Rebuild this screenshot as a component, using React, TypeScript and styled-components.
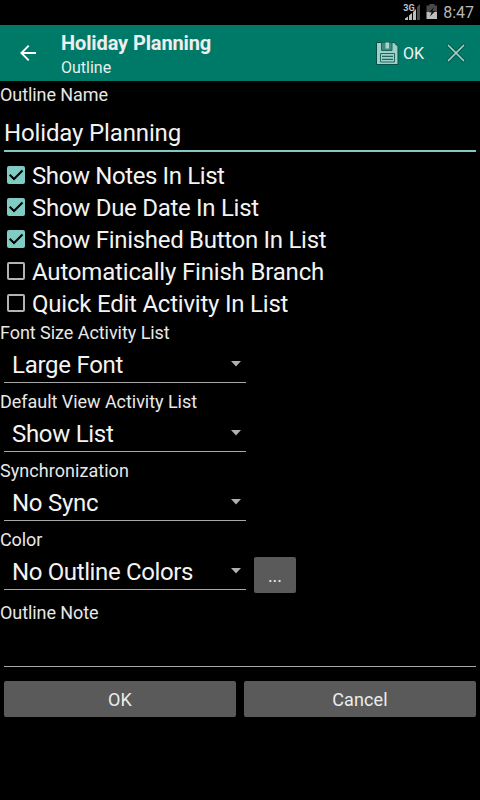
import React from "react";
import styled, { createGlobalStyle } from "styled-components";

const GlobalStyle = createGlobalStyle`
  *, *::before, *::after { box-sizing: border-box; }
  body { margin: 0; background: #000; }
  button { border: 0; padding: 0; font: inherit; color: inherit; background: none; }
`;

const Screen = styled.div`
  width: 480px;
  height: 800px;
  overflow: hidden;
  background: #000;
  color: #f3f3f3;
  font-family: Roboto, sans-serif;
  white-space: nowrap;
`;

const StatusBar = styled.div`
  display: flex;
  justify-content: flex-end;
  height: 25px;
  padding-right: 6px;
`;

const Clock = styled.span`
  margin-left: 5px;
  font-size: 16px;
  line-height: 25px;
  color: #b8b8b8;
`;

const AppBar = styled.header`
  display: flex;
  align-items: center;
  height: 56px;
  background: #007a68;
`;

const BackButton = styled.button`
  display: flex;
  width: 61px;
  height: 56px;
`;

const Titles = styled.div`
  flex: 1;
  height: 56px;
  padding-top: 6px;
`;

const Title = styled.h1`
  margin: 0;
  font-size: 20px;
  line-height: 24px;
  font-weight: 700;
  letter-spacing: -0.12px;
  color: #eeeeee;
`;

const Subtitle = styled.div`
  font-size: 16px;
  line-height: 26px;
  color: #e6f0ee;
`;

const SaveAction = styled.button`
  display: flex;
  align-items: center;
  width: 61px;
  height: 56px;
  font-size: 16px;
`;

const CloseAction = styled.button`
  display: flex;
  width: 48px;
  height: 56px;
`;

const Label = styled.div<{ $height?: number; $spacing?: number }>`
  height: ${(p) => p.$height ?? 26}px;
  font-size: 18px;
  line-height: ${(p) => p.$height ?? 26}px;
  letter-spacing: ${(p) => p.$spacing ?? 0}px;
  color: #e8e8e8;
`;

const TextField = styled.div`
  height: 43px;
  margin: 0 4px 8px;
  padding-top: 8px;
  border-bottom: 2px solid #80cbc4;
  font-size: 24px;
  line-height: 32px;
  letter-spacing: -0.14px;
`;

const CheckRow = styled.div<{ $spacing: number }>`
  display: flex;
  height: 32px;
  padding-left: 7px;
  font-size: 24px;
  line-height: 32px;
  letter-spacing: ${(p) => p.$spacing}px;
`;

const Box = styled.span<{ $checked: boolean }>`
  flex: none;
  width: 18px;
  height: 18px;
  margin: 6px 7px 0 0;
  border: 2px solid ${(p) => (p.$checked ? "#80cbc4" : "#b3b3b3")};
  border-radius: 2px;
  background: ${(p) => (p.$checked ? "#80cbc4" : "transparent")};

  svg { display: block; margin: -2px; }
`;

const Group = styled.section`
  height: 69px;
`;

const SpinnerRow = styled.div`
  display: flex;
  gap: 8px;
  padding-left: 4px;
`;

const Spinner = styled.div<{ $spacing: number }>`
  display: flex;
  justify-content: space-between;
  width: 242px;
  height: 37px;
  padding: 3px 5px 0 8px;
  border-bottom: 1px solid #a8a8a8;
  font-size: 24px;
  line-height: 32px;
  letter-spacing: ${(p) => p.$spacing}px;
`;

const Arrow = styled.svg`
  display: block;
  width: 10px;
  height: 6px;
  margin-top: 12px;
`;

const RaisedButton = styled.button<{ $spacing?: number }>`
  height: 36px;
  border-radius: 2px;
  background: #5a5a5a;
  font-size: 18px;
  line-height: 37px;
  letter-spacing: ${(p) => p.$spacing ?? 0}px;
  color: #ececec;
`;

const MoreButton = styled(RaisedButton)`
  width: 42px;
  margin-top: 4px;
`;

const NoteField = styled.div`
  height: 41px;
  margin: 0 4px 14px;
  border-bottom: 1px solid #a8a8a8;
`;

const NoteLabel = styled(Label)`
  margin-top: 4px;
`;

const Footer = styled.footer`
  display: grid;
  grid-template-columns: 1fr 1fr;
  gap: 8px;
  padding: 0 4px;
`;

const checks = [
  { text: "Show Notes In List", on: true, spacing: -0.39 },
  { text: "Show Due Date In List", on: true, spacing: -0.29 },
  { text: "Show Finished Button In List", on: true, spacing: -0.29 },
  { text: "Automatically Finish Branch", on: false, spacing: -0.18 },
  { text: "Quick Edit Activity In List", on: false, spacing: -0.22 },
];

const spinners = [
  { label: "Font Size Activity List", labelSpacing: -0.05, value: "Large Font", spacing: -0.27 },
  { label: "Default View Activity List", labelSpacing: -0.04, value: "Show List", spacing: -0.3 },
  { label: "Synchronization", labelSpacing: 0.05, value: "No Sync", spacing: -0.27 },
  { label: "Color", labelSpacing: -0.1, value: "No Outline Colors", spacing: -0.37, more: true },
];

const StatusIcons = () => (
  <svg width="36" height="25" viewBox="402 0 36 25">
    <text x="403.3" y="11" fontFamily="Roboto" fontSize="9" fontWeight="700" fill="#c4c4c4">3G</text>
    <path d="M405 20v-1.500L408 16.500V20zM409 20v-4.500L412 13v7zM413 20v-8L416 9v11z" fill="#bdbdbd" />
    <path d="M417 20V7L420 4v16z" fill="#4a4a4a" />
    <path d="M429.500 4h5v1.500h2.500V12h-10.500V5.500h3z" fill="#4a4a4a" />
    <path d="M426.500 12h10.500v7h-10.500z" fill="#bdbdbd" />
    <path d="M434 7l-5 5.200h2.600L430 16.500l5.200-5.500h-2.700z" fill="#111" />
  </svg>
);

export default function App() {
  return (
    <Screen>
      <GlobalStyle />
      <StatusBar>
        <StatusIcons />
        <Clock>8:47</Clock>
      </StatusBar>

      <AppBar>
        <BackButton aria-label="Back">
          <svg width="61" height="56" viewBox="0 25 61 56" fill="none" stroke="#fff" strokeWidth="1.900">
            <path d="M36 53H21.500M28.700 45.700L21.400 53l7.300 7.300" />
          </svg>
        </BackButton>
        <Titles>
          <Title>Holiday Planning</Title>
          <Subtitle>Outline</Subtitle>
        </Titles>
        <SaveAction>
          <svg width="32" height="56" viewBox="371 25 32 56">
            <path d="M376.500 42.500h17.500l4 4v18h-21.500z" fill="#9fcfc6" stroke="#084f45" />
            <path d="M381.500 42.500h10.500v8h-10.500z" fill="#3a8e81" stroke="#19665a" />
            <path d="M385.500 42.500h3.500v6h-3.500z" fill="#a9d5cd" />
            <path d="M380.500 53.500h14v8.500h-14z" fill="#9fcfc6" stroke="#1d6a5f" />
            <path d="M382 56.300h11M382 59.300h11" stroke="#1d6a5f" strokeWidth="1.200" />
          </svg>
          OK
        </SaveAction>
        <CloseAction aria-label="Close">
          <svg width="48" height="56" viewBox="432 25 48 56" fill="none" strokeLinecap="round">
            <path d="M448.500 45.500l15 15M463.500 45.500l-15 15" stroke="#07584c" strokeWidth="3.600" />
            <path d="M448.500 45.500l15 15M463.500 45.500l-15 15" stroke="#a5d3cb" strokeWidth="1.700" />
          </svg>
        </CloseAction>
      </AppBar>

      <Label $height={28} $spacing={-0.08}>Outline Name</Label>
      <TextField>Holiday Planning</TextField>

      {checks.map((c) => (
        <CheckRow key={c.text} $spacing={c.spacing}>
          <Box $checked={c.on}>
            {c.on && (
              <svg width="18" height="18" viewBox="0 0 18 18" fill="none" stroke="#000" strokeWidth="2">
                <path d="M2.700 8.700l4.300 4.300 8.500-8.500" />
              </svg>
            )}
          </Box>
          {c.text}
        </CheckRow>
      ))}

      {spinners.map((s) => (
        <Group key={s.label}>
          <Label $spacing={s.labelSpacing}>{s.label}</Label>
          <SpinnerRow>
            <Spinner $spacing={s.spacing}>
              {s.value}
              <Arrow viewBox="0 0 10 6"><path d="M0 0h10L5 5.500z" fill="#b0b0b0" /></Arrow>
            </Spinner>
            {s.more && <MoreButton>...</MoreButton>}
          </SpinnerRow>
        </Group>
      ))}

      <NoteLabel $spacing={-0.08}>Outline Note</NoteLabel>
      <NoteField />
      <Footer>
        <RaisedButton $spacing={0.1}>OK</RaisedButton>
        <RaisedButton $spacing={0.15}>Cancel</RaisedButton>
      </Footer>
    </Screen>
  );
}
